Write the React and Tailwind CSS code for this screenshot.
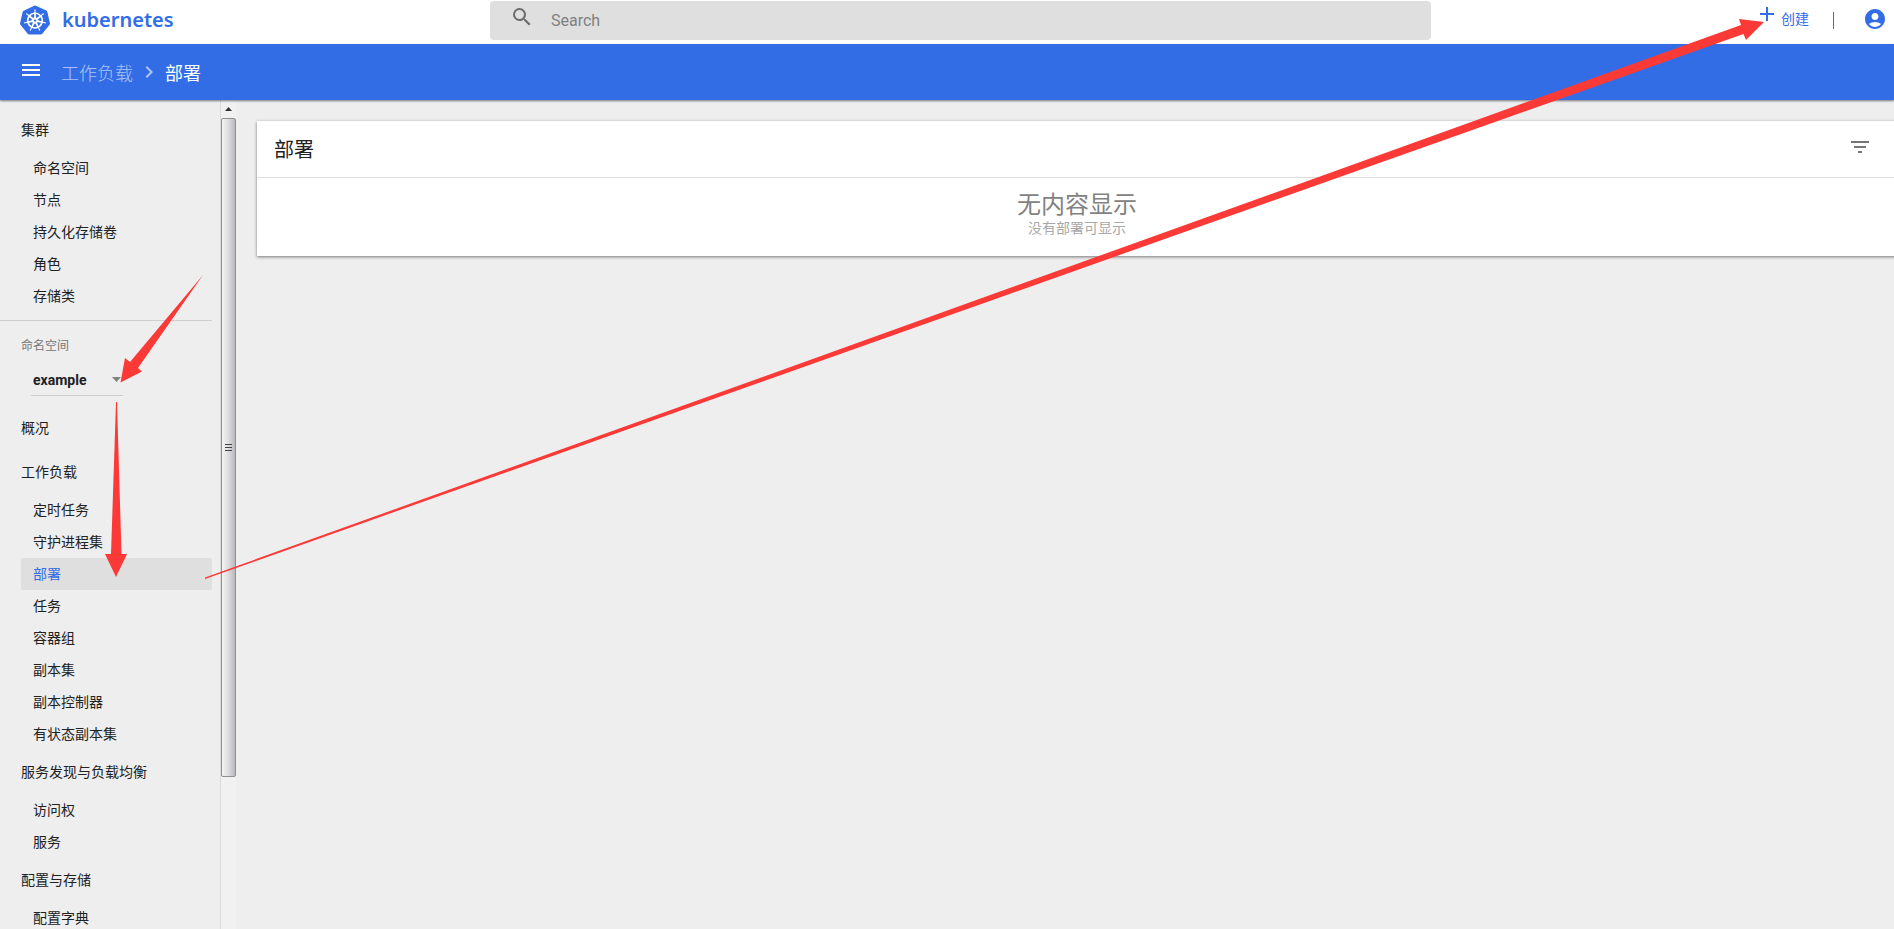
import React from "react";
import { SiKubernetes } from "react-icons/si";
import {
  MdSearch,
  MdMenu,
  MdChevronRight,
  MdAccountCircle,
  MdFilterList,
  MdAdd,
} from "react-icons/md";

const clusterItems = ["命名空间", "节点", "持久化存储卷", "角色", "存储类"];
const workloadItems = [
  "定时任务",
  "守护进程集",
  "部署",
  "任务",
  "容器组",
  "副本集",
  "副本控制器",
  "有状态副本集",
];
const discoveryItems = ["访问权", "服务"];
const configItems = ["配置字典"];

function NavGroup({ title, items, active }) {
  return (
    <section>
      <NavHeading>{title}</NavHeading>
      <ul className="pl-[21px]">
        {items.map((item) => (
          <li key={item}>
            <a
              href="#"
              aria-current={item === active ? "page" : undefined}
              className={
                item === active
                  ? "flex h-8 items-center rounded-xs bg-[#dfdfdf] pl-3 text-[#326de6]"
                  : "flex h-8 items-center rounded-xs pl-3"
              }
            >
              {item}
            </a>
          </li>
        ))}
      </ul>
    </section>
  );
}

function NavHeading({ children }) {
  return (
    <a href="#" className="flex h-11 items-center pl-[21px]">
      {children}
    </a>
  );
}

function TopBar() {
  return (
    <header className="flex h-11 shrink-0 bg-white">
      <a href="#" className="flex w-[490px] shrink-0 items-center pb-1 pl-5 text-[#326de6]">
        <SiKubernetes className="size-[30px]" aria-hidden="true" />
        <span className="pl-3 font-['Noto_Sans'] text-xl leading-6 font-semibold">kubernetes</span>
      </a>
      <label className="mt-px flex h-[39px] min-w-0 flex-1 rounded-sm bg-[#dfdfdf] pl-5">
        <MdSearch className="mt-1 size-6 shrink-0 text-[#6b6b6b]" aria-hidden="true" />
        <input
          type="text"
          placeholder="Search"
          aria-label="Search"
          className="h-full min-w-0 flex-1 bg-transparent pl-[17px] text-base outline-none placeholder:text-[#808080]"
        />
      </label>
      <div className="flex w-[463px] shrink-0 justify-end pr-[7px] text-[#326de6]">
        <button type="button" className="flex h-[38px] gap-0.5">
          <MdAdd className="mt-0.5 size-6" aria-hidden="true" />
          <span className="self-center text-sm">创建</span>
        </button>
        <span className="mt-3 ml-6 h-[17px] w-px bg-[#326de6]" />
        <button type="button" aria-label="Account" className="ml-[29px] flex h-[38px] items-center">
          <MdAccountCircle className="size-6" />
        </button>
      </div>
    </header>
  );
}

function Toolbar() {
  return (
    <div className="relative z-10 flex h-14 shrink-0 items-center bg-[#326de6] pl-[19px] text-lg text-white shadow-[0_1px_2px_rgba(0,0,0,0.5)]">
      <button type="button" aria-label="Menu" className="pb-1">
        <MdMenu className="size-6" />
      </button>
      <nav className="flex items-center pt-1 pl-[18px]">
        <a href="#" className="font-light text-white/60">工作负载</a>
        <MdChevronRight className="mx-1 mb-1 size-6 text-white/60" aria-hidden="true" />
        <span>部署</span>
      </nav>
    </div>
  );
}

function ScrollRail() {
  return (
    <div className="flex w-4 shrink-0 flex-col items-center border-l border-[#dcdcdc] bg-[#f1f1f1]" aria-hidden="true">
      <svg className="mt-[7px] h-1 w-[7px] shrink-0" viewBox="0 0 7 4">
        <path d="M0 4 3.500 0 7 4z" fill="#333" />
      </svg>
      <div className="mt-[7px] flex h-[659px] w-full shrink-0 items-center justify-center rounded-xs border border-[#8e8e91] bg-linear-to-r from-[#f5f5f5] via-[#dcdcde] to-[#b9b9bd]">
        <svg className="h-[9px] w-[7px]" viewBox="0 0 7 9">
          <path d="M0 1.500h7M0 4.500h7M0 7.500h7" stroke="#444" />
        </svg>
      </div>
    </div>
  );
}

function Sidebar() {
  return (
    <aside className="flex w-[236px] shrink-0">
      <nav className="min-w-0 flex-1 overflow-hidden pt-2 pr-2 text-sm text-[#212121]">
        <NavGroup title="集群" items={clusterItems} />
        <hr className="mt-2 border-t border-[#cecece]" />
        <div className="flex h-[85px] flex-col pt-[17px] pl-[21px]">
          <label htmlFor="namespace" className="text-xs text-[#757575]">
            命名空间
          </label>
          <div className="relative mt-2.5 ml-2.5 flex h-8 w-[92px] items-center border-b border-[#cecece]">
            <select
              id="namespace"
              className="w-full appearance-none bg-transparent pl-0.5 text-sm font-bold outline-none"
            >
              <option>example</option>
            </select>
            <svg className="pointer-events-none absolute right-0.5 h-[5px] w-[9px]" viewBox="0 0 9 5">
              <path d="M0 0h9L4.500 5z" fill="#828282" />
            </svg>
          </div>
        </div>
        <NavHeading>概况</NavHeading>
        <NavGroup title="工作负载" items={workloadItems} active="部署" />
        <NavGroup title="服务发现与负载均衡" items={discoveryItems} />
        <NavGroup title="配置与存储" items={configItems} />
      </nav>
      <ScrollRail />
    </aside>
  );
}

function Deployments() {
  return (
    <main className="min-w-0 flex-1 overflow-hidden pt-[21px] pl-[21px]">
      <section className="-mr-[3px] bg-white shadow-[0_1px_3px_rgba(0,0,0,0.5)]">
        <div className="flex h-14 items-center justify-between pr-[25px] pl-[17px]">
          <h1 className="pt-0.5 text-xl text-[#212121]">部署</h1>
          <button type="button" aria-label="Filter" className="pb-1 text-[#757575]">
            <MdFilterList className="size-6" />
          </button>
        </div>
        <div className="border-t border-[#dedede] pt-3 pb-5 text-center">
          <p className="text-2xl leading-[30px] text-[#828282]">无内容显示</p>
          <p className="text-sm leading-4 text-[#a8a8a8]">没有部署可显示</p>
        </div>
      </section>
    </main>
  );
}

function Arrows() {
  return (
    <svg
      className="pointer-events-none absolute top-0 left-0 z-20 h-[929px] w-[1894px]"
      viewBox="0 0 1894 929"
      fill="#fb3a38"
      aria-hidden="true"
    >
      <path d="M203 275 138 368l4 3.500-21.500 11 4.500-24.500 5 4z" />
      <path d="M116 402h1l4.500 152h5.500l-11 23-11-23h6z" />
      <path d="M205 577.500 1741 25l-2-6 25 3-18 18-2.500-6L205 579z" />
    </svg>
  );
}

export default function App() {
  return (
    <div className="relative flex h-screen flex-col overflow-hidden bg-[#eeeeee] font-[Roboto,'Noto_Sans_CJK_SC',sans-serif]">
      <TopBar />
      <Toolbar />
      <div className="flex min-h-0 flex-1">
        <Sidebar />
        <Deployments />
      </div>
      <Arrows />
    </div>
  );
}
